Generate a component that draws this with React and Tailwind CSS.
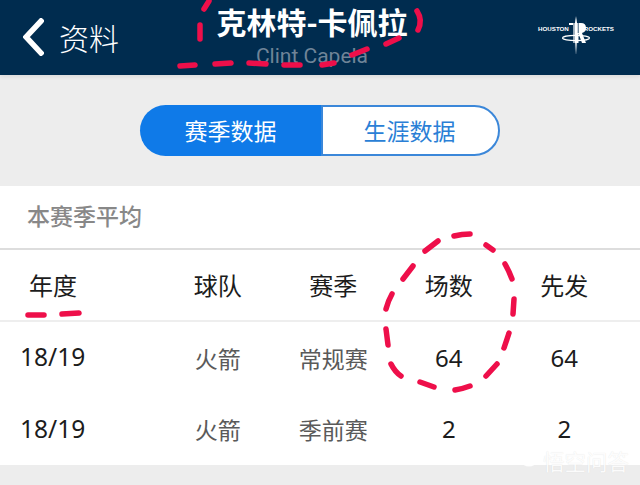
const cjk = { fontFamily: '"Noto Sans CJK SC", "Noto Sans", sans-serif' };
const digits = { fontFamily: '"Noto Sans", "Noto Sans CJK SC", sans-serif' };

const dashes = [
  "M180 66 L195 65", "M215 64 L231 63", "M249 63 L266 64", "M284 65 L300 65",
  "M322 65 L334 63", "M352 55 L367 49", "M386 44 L399 38",
  "M200 39 L200 25", "M204 9 L209 1", "M417 11 Q423 20 418 30",
  "M454 236 Q462 234 470 234", "M486 245 L493 250", "M505 264 Q509 271 512 279", "M514 299 L513 314",
  "M509 333 L504 348", "M497 364 L486 376", "M470 386 Q462 389 455 390", "M434 387 L420 382",
  "M401 376 Q395 372 391 364", "M388 345 L386 329", "M386 309 Q388 301 392 294", "M403 279 L413 266", "M425 251 L438 241",
  "M28 315 L44 315", "M62 314 L79 313",
];

function Scribbles() {
  return (
    <svg className="absolute left-0 top-0" width="640" height="485" fill="none" stroke="#ee0f4a" strokeWidth="5.5" strokeLinecap="round">
      {dashes.map((d) => <path key={d} d={d} />)}
    </svg>
  );
}

function Logo() {
  return (
    <div className="relative w-[76px] h-[38px] flex items-center justify-between text-white font-bold text-[6.2px] leading-none" style={{ fontFamily: '"Liberation Sans", sans-serif' }}>
      <span className="mt-[-12px]">HOUSTON</span>
      <span className="mt-[-12px]">ROCKETS</span>
      <svg className="absolute left-[22px] top-0" width="32" height="38" viewBox="0 0 32 38" fill="none">
        <defs>
          <linearGradient id="fade" x1="0" y1="0" x2="0" y2="1">
            <stop offset="0.6" stopColor="#fff" />
            <stop offset="1" stopColor="#fff" stopOpacity="0.1" />
          </linearGradient>
        </defs>
        <path d="M9 7 H21 Q26 7 26 12 Q26 16 22 17 L26 27 H22 L18.5 17.5 V27 H13 V9 H9 Z" fill="#fff" />
        <path d="M14 6 V30 M18.2 6 V17" stroke="#002c4f" strokeWidth="0.8" />
        <path d="M16 0 L17.2 8 L17 38 L15 38 L14.8 8 Z" fill="url(#fade)" />
        <ellipse cx="16" cy="22" rx="13.5" ry="2.6" stroke="#fff" strokeWidth="1.2" />
      </svg>
    </div>
  );
}

function Row({ cols, header }) {
  return (
    <div className={`grid grid-cols-[160px_repeat(4,115.5px)] items-center ${header ? "h-[72px] border-b-2 border-[#eeeeee]" : "h-[71.5px]"} text-[24px]`}>
      {cols.map((c, i) => {
        const num = !header && (i === 0 || i > 2);
        return (
          <div
            key={i}
            style={num ? digits : undefined}
            className={`${i === 0 ? (header ? "pl-[29px]" : "pl-[20px] text-[24.5px]") : "text-center"} ${!header && (i === 1 || i === 2) ? "text-[#5a5a5a] text-[23px]" : "text-[#1c1c1c]"}`}
          >
            {c}
          </div>
        );
      })}
    </div>
  );
}

export default function App() {
  return (
    <div className="relative w-[640px] h-[485px] overflow-hidden bg-[#ededed]" style={cjk}>
      <header className="h-[75px] bg-[#002c4f] grid grid-cols-[216px_192px_1fr] shadow-[0_2px_4px_rgba(0,0,0,0.08)]">
        <div className="flex items-center gap-[15px] pl-[23px] pb-[2px]">
          <svg width="21" height="38" viewBox="0 0 21 38" fill="none" stroke="#fff" strokeWidth="5.5" strokeLinecap="square">
            <path d="M18 3 L3 19 L18 35" />
          </svg>
          <span className="text-white text-[30px] leading-none font-light">资料</span>
        </div>
        <div className="flex flex-col items-center">
          <div className="text-white text-[30px] font-bold leading-[42px] whitespace-nowrap">克林特-卡佩拉</div>
          <div className="text-[#6f8498] text-[21px] leading-[28px] whitespace-nowrap" style={{ fontFamily: 'Roboto, sans-serif' }}>Clint Capela</div>
        </div>
        <div className="flex items-center justify-end pr-[26px] pb-[5px]">
          <Logo />
        </div>
      </header>

      <div className="flex justify-center pt-[30px]">
        <div className="flex w-[360px] h-[51px] text-[23px]">
          <div className="w-[181px] rounded-l-full bg-[#0f7ae8] text-white flex items-center justify-center">赛季数据</div>
          <div className="w-[179px] rounded-r-full bg-white border-2 border-[#3b87d9] text-[#2a7fd6] flex items-center justify-center pr-[2px]">生涯数据</div>
        </div>
      </div>

      <section className="mt-[30px] bg-white">
        <div className="h-[64px] pl-[27px] pb-[4px] flex items-center border-b-2 border-[#dddddd] text-[23px] text-[#888888] font-medium">本赛季平均</div>
        <Row header cols={["年度", "球队", "赛季", "场数", "先发"]} />
        <Row cols={["18/19", "火箭", "常规赛", "64", "64"]} />
        <Row cols={["18/19", "火箭", "季前赛", "2", "2"]} />
      </section>

      <div className="absolute left-[509px] top-[449px] flex items-center gap-[7px] text-white/90 text-[21.5px] leading-[24px] whitespace-nowrap [text-shadow:0_0_1px_rgba(0,0,0,0.12)]">
        <svg width="27" height="14" viewBox="0 0 27 14" fill="rgba(255,255,255,0.9)">
          <ellipse cx="8" cy="6" rx="8" ry="5" />
          <ellipse cx="20" cy="8" rx="7" ry="4.5" />
        </svg>
        <span>悟空问答</span>
      </div>

      <Scribbles />
    </div>
  );
}
